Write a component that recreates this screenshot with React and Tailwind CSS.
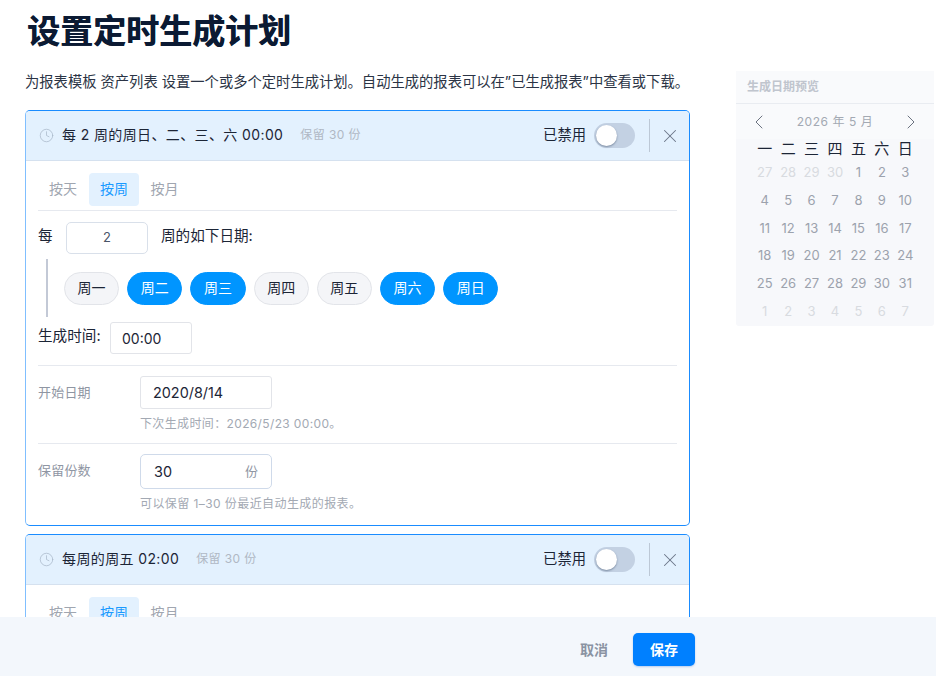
import { Clock, X, ChevronLeft, ChevronRight } from "lucide-react";

const FONT = "font-['Inter','Noto_Sans_CJK_SC',sans-serif]";

const days = [
  { label: "周一", on: false },
  { label: "周二", on: true },
  { label: "周三", on: true },
  { label: "周四", on: false },
  { label: "周五", on: false },
  { label: "周六", on: true },
  { label: "周日", on: true },
];

const weeks = [
  [27, 28, 29, 30, 1, 2, 3],
  [4, 5, 6, 7, 8, 9, 10],
  [11, 12, 13, 14, 15, 16, 17],
  [18, 19, 20, 21, 22, 23, 24],
  [25, 26, 27, 28, 29, 30, 31],
  [1, 2, 3, 4, 5, 6, 7],
];

function PlanCard({ title }) {
  return (
    <div className="w-[665px] border border-[#1a8cff] border-l-[#80bfff] rounded-[5px] overflow-hidden bg-white shrink-0">
      {/* Header */}
      <div className="h-[50px] bg-[#e3f1fe] border-b border-[#d5e1ef] flex items-center pl-[13px] pr-[8px]">
        <Clock size={15} strokeWidth={1.2} className="text-[#aab8ca]" />
        <span className="ml-[8px] pb-[2px] text-[14px] tracking-[0.38px] text-[#1c2536]">{title}</span>
        <span className="ml-[17px] pb-[2px] text-[12px] tracking-[0.4px] text-[#b0b8c4]">保留 30 份</span>
        <span className="ml-auto pb-[2px] text-[14.3px] text-[#1c2536]">已禁用</span>
        <div className="ml-[8px] w-[41px] h-[25px] rounded-full bg-[#c3d1e3] flex items-center pl-[2px]">
          <div className="w-[21px] h-[21px] rounded-full bg-white shadow-[0_1px_2px_rgba(30,50,80,0.45)]" />
        </div>
        <div className="ml-[14px] w-px h-[33px] bg-[#bcc8d6]" />
        <X size={22} strokeWidth={1.1} className="ml-[9px] text-[#6b7688]" />
      </div>

      {/* Body */}
      <div className="pl-[12px] pr-[12px]">
        <div className="pt-[12px] pb-[4px] border-b border-[#e6e9ef] flex">
          <span className="w-[51px] h-[33px] pb-[2px] pr-[1px] flex items-center justify-center text-[14px] text-[#a0a6b0]">按天</span>
          <span className="w-[50px] h-[33px] pb-[2px] flex items-center justify-center text-[14px] text-[#1a9aff] bg-[#e3f1fe] rounded-[4px]">按周</span>
          <span className="w-[51px] h-[33px] pb-[2px] flex items-center justify-center text-[14px] text-[#a0a6b0]">按月</span>
        </div>

        <div className="mt-[11px] flex items-center h-[32px]">
          <span className="w-[28px] pb-[2px] text-[14.6px] text-[#1c2536]">每</span>
          <div className="w-[82px] h-[32px] border border-[#d9e0ea] rounded-[5px] flex items-center justify-center text-[13px] text-[#4a5568]">2</div>
          <span className="ml-[13px] pb-[2px] text-[14.6px] text-[#1c2536]">周的如下日期:</span>
        </div>

        <div className="mt-[5px] ml-[8px] border-l-2 border-[#c3c9d6] h-[58px] flex items-center gap-[8px] pl-[16px]">
          {days.map((d) => (
            <span
              key={d.label}
              className={
                d.on
                  ? "w-[55.2px] h-[33px] pb-[2px] rounded-full bg-[#0095ff] border border-[#0095ff] flex items-center justify-center text-[14px] text-white"
                  : "w-[55.2px] h-[33px] pb-[2px] rounded-full bg-[#f4f5f8] border border-[#e2e4e9] flex items-center justify-center text-[14px] text-[#1c2536]"
              }
            >
              {d.label}
            </span>
          ))}
        </div>

        <div className="mt-[5px] flex items-center h-[32px]">
          <span className="w-[72px] pb-[2px] text-[14.6px] text-[#1c2536]">生成时间:</span>
          <div className="w-[82px] h-[32px] border border-[#e2e4e9] rounded-[3px] flex items-center pl-[11px] text-[14px] text-[#1c2536]">00:00</div>
        </div>

        <div className="mt-[11px] border-t border-[#e6e9ef] pt-[10px] pb-[9px] flex">
          <span className="w-[102px] pt-[7px] text-[13px] tracking-[0.2px] text-[#8f96a3]">开始日期</span>
          <div>
            <div className="w-[132px] h-[33px] border border-[#e2e4e9] rounded-[3px] flex items-center pl-[12px] text-[14.4px] text-[#1c2536]">2020/8/14</div>
            <p className="mt-[5px] text-[12px] leading-[20px] tracking-[0.36px] text-[#a3a9b3]">下次生成时间：2026/5/23 00:00。</p>
          </div>
        </div>

        <div className="border-t border-[#e6e9ef] pt-[10px] pb-[11px] flex">
          <span className="w-[102px] pt-[7px] text-[13px] tracking-[0.2px] text-[#8f96a3]">保留份数</span>
          <div>
            <div className="w-[132px] h-[35px] border border-[#cfdaea] rounded-[5px] flex items-center pl-[13px] pr-[13px] text-[14.4px] text-[#1c2536]">
              30
              <span className="ml-auto text-[13px] text-[#8f96a3]">份</span>
            </div>
            <p className="mt-[5px] text-[12px] leading-[20px] tracking-[0.42px] text-[#a3a9b3]">可以保留 1–30 份最近自动生成的报表。</p>
          </div>
        </div>
      </div>
    </div>
  );
}

function Preview() {
  return (
    <div className="w-[198px] h-[255px] mt-[71px] bg-[#f7f8fb] rounded-[3px] shrink-0">
      <div className="h-[33px] border-b border-[#e9ecf1] bg-[#f9fafc] pl-[11px] flex items-center text-[12px] font-bold text-[#c0c5ce]">
        生成日期预览
      </div>
      <div className="h-[35px] flex items-center justify-between px-[11px] bg-[#f9fafc]">
        <ChevronLeft size={24} strokeWidth={1} className="text-[#6b7280]" />
        <span className="text-[12px] tracking-[0.55px] text-[#a3a9b3]">2026 年 5 月</span>
        <ChevronRight size={24} strokeWidth={1} className="text-[#6b7280]" />
      </div>
      <div className="grid grid-cols-7 w-[164px] ml-[17px] text-center">
        {["一", "二", "三", "四", "五", "六", "日"].map((d) => (
          <span key={d} className="h-[20px] flex items-center justify-center text-[15px] text-[#1c2536]">{d}</span>
        ))}
        {weeks.map((week, i) =>
          week.map((n, j) => {
            const muted = i === 5 || (i === 0 && j < 4);
            return (
              <span
                key={`${i}-${j}`}
                className={
                  muted
                    ? "h-[27.75px] flex items-center justify-center text-[13px] text-[#d8dbe0]"
                    : "h-[27.75px] flex items-center justify-center text-[13px] text-[#9ca2ad]"
                }
              >
                {n}
              </span>
            );
          })
        )}
      </div>
    </div>
  );
}

export default function App() {
  return (
    <div className={`${FONT} w-[936px] h-[676px] flex flex-col overflow-hidden bg-white`}>
      <div className="flex-1 min-h-0 overflow-hidden flex">
        <div className="w-[690px] pl-[25px] shrink-0">
          <h1 className="mt-[11px] ml-[2px] text-[33px] leading-[40px] font-bold text-[#0b1a33] [text-shadow:0.6px_0_0_#0b1a33]">设置定时生成计划</h1>
          <p className="mt-[20px] text-[14.3px] leading-[22px] text-[#2b3445]">
            为报表模板 资产列表 设置一个或多个定时生成计划。自动生成的报表可以在”已生成报表”中查看或下载。
          </p>
          <div className="mt-[17px] flex flex-col gap-[8px]">
            <PlanCard title="每 2 周的周日、二、三、六 00:00" />
            <PlanCard title="每周的周五 02:00" />
          </div>
        </div>
        <div className="ml-[46px]">
          <Preview />
        </div>
      </div>

      {/* Footer */}
      <div className="h-[59px] bg-[#f3f7fc] flex items-start justify-end pr-[241px] pt-[16px] shrink-0">
        <span className="h-[33px] flex items-center text-[14px] font-bold text-[#8a93a3]">取消</span>
        <button className="ml-[25px] w-[62px] h-[33px] rounded-[5px] bg-[#0080ff] text-[14px] font-bold text-white shadow-[0_1px_2px_rgba(0,80,200,0.25)]">
          保存
        </button>
      </div>
    </div>
  );
}
